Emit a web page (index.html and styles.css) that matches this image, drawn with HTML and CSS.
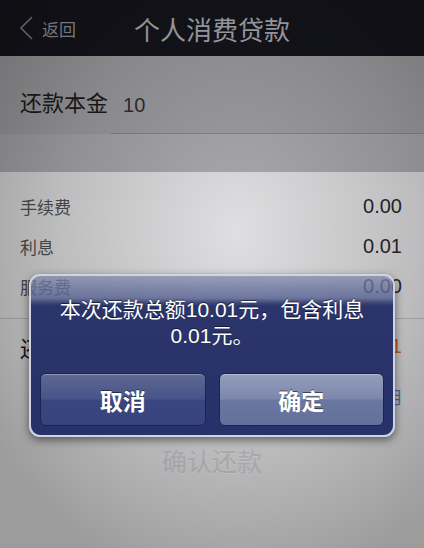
FILE: index.html
```html
<!DOCTYPE html>
<html lang="zh-CN">
<head>
    <meta charset="UTF-8">
    <meta name="viewport" content="width=device-width, initial-scale=1.0">
    <title>个人消费贷款</title>
    <link rel="stylesheet" href="styles.css">
</head>
<body>
    <div class="screen">
        <header class="nav-bar">
            <a class="back" href="#">
                <svg class="back-icon" width="14" height="24" viewBox="0 0 14 24">
                    <polyline points="13,1 2,12 13,23" fill="none" stroke="#85858d" stroke-width="1.6"></polyline>
                </svg>
                <span>返回</span>
            </a>
            <h1 class="nav-title">个人消费贷款</h1>
            <div></div>
        </header>

        <!-- 还款本金 -->
        <div class="principal">
            <span class="principal-label">还款本金</span>
            <span class="principal-value">10</span>
        </div>
        <div class="principal-line"></div>
        <div class="band"></div>

        <section class="details">
            <div class="detail-row">
                <span class="detail-label">手续费</span>
                <span class="detail-value">0.00</span>
            </div>
            <div class="detail-row">
                <span class="detail-label">利息</span>
                <span class="detail-value">0.01</span>
            </div>
            <div class="detail-row">
                <span class="detail-label">服务费</span>
                <span class="detail-value">0.00</span>
            </div>
            <div class="total-row">
                <span class="total-label">还款总额</span>
                <span class="total-value">10.01</span>
            </div>
            <div class="term-row">
                <a class="term-link" href="#">分期1个月</a>
            </div>
            <div class="submit-wrap">
                <button class="submit-btn">确认还款</button>
            </div>
        </section>

        <div class="dim"></div>

        <div class="alert">
            <p class="alert-text">本次还款总额10.01元，包含利息<br>0.01元。</p>
            <div class="alert-buttons">
                <button class="alert-btn alert-cancel">取消</button>
                <button class="alert-btn alert-ok">确定</button>
            </div>
        </div>
    </div>
</body>
</html>
```

FILE: styles.css
```css
* {
    box-sizing: border-box;
    margin: 0;
    padding: 0;
}

body {
    font-family: "Liberation Sans", "Noto Sans CJK SC", sans-serif;
    background: #e4e4e6;
}

.screen {
    position: relative;
    width: 424px;
    height: 548px;
    overflow: hidden;
    background: #e6e6e8;
}

.nav-bar {
    display: grid;
    grid-template-columns: 1fr auto 1fr;
    align-items: center;
    height: 56px;
    background: #15151d;
}

.back {
    display: flex;
    align-items: center;
    padding-left: 19px;
    color: #9c9ca4;
    font-size: 17px;
    text-decoration: none;
}

.back-icon {
    margin-right: 9px;
}

.nav-title {
    font-size: 26px;
    font-weight: normal;
    color: #b2b2ba;
}

.principal {
    display: flex;
    align-items: flex-end;
    height: 77px;
    padding: 0 20px 16px;
    background: #a6a6aa;
}

.principal-label {
    font-size: 22px;
    color: #1c1c1e;
}

.principal-value {
    margin-left: 15px;
    font-size: 20px;
    color: #333;
}

.principal-line {
    height: 1px;
    background: linear-gradient(to right, #a6a6aa 110px, #8e8e92 110px);
}

.band {
    height: 38px;
    background: #b0b0b4;
}

.details {
    height: 400px;
    padding-top: 14px;
    background: #e6e6e8;
}

.detail-row {
    display: flex;
    justify-content: space-between;
    align-items: center;
    height: 40px;
    padding: 0 22px 0 20px;
}

.detail-label {
    font-size: 17px;
    color: #535355;
}

.detail-value {
    font-size: 20px;
    color: #2a2a2c;
}

.total-row {
    display: flex;
    justify-content: space-between;
    align-items: center;
    height: 56px;
    margin-top: 12px;
    padding: 0 22px 0 20px;
    border-top: 1px solid #c4c4c8;
}

.total-label {
    font-size: 22px;
    color: #1c1c1e;
}

.total-value {
    font-size: 20px;
    color: #e0701e;
}

.term-row {
    display: flex;
    justify-content: flex-end;
    align-items: center;
    height: 44px;
    padding-right: 21px;
}

.term-link {
    font-size: 17px;
    color: #4c86c4;
    text-decoration: none;
}

.submit-wrap {
    padding: 18px 20px 0;
}

.submit-btn {
    width: 100%;
    height: 48px;
    border: none;
    background: transparent;
    font-family: inherit;
    font-size: 25px;
    color: #cfcfd3;
    text-shadow: 0 1px 0 rgba(255,255,255,0.4);
}

.dim {
    position: absolute;
    top: 0;
    left: 0;
    right: 0;
    bottom: 0;
    background: radial-gradient(ellipse 300px 360px at 56% 42%, rgba(0,0,0,0.03) 0%, rgba(0,0,0,0.18) 60%, rgba(0,0,0,0.32) 100%);
}

.alert {
    position: absolute;
    left: 29px;
    top: 274px;
    width: 366px;
    height: 163px;
    padding: 21px 9px 9px;
    border: 2px solid #cfd3e2;
    border-radius: 11px;
    background: linear-gradient(to bottom, rgba(128,136,172,0.72) 0, rgba(86,98,146,0.82) 22px, rgba(52,64,112,0.95) 27px, #2b356b 30px, #27316a 100%);
    box-shadow: 0 3px 8px rgba(0,0,0,0.5);
}

.alert-text {
    font-size: 21px;
    line-height: 26px;
    color: #fff;
    text-align: center;
    text-shadow: 0 -1px 0 rgba(0,0,0,0.5);
}

.alert-buttons {
    display: flex;
    gap: 13px;
    margin-top: 24px;
}

.alert-btn {
    flex: 1;
    height: 53px;
    border: 1px solid #1a2352;
    border-radius: 6px;
    font-family: inherit;
    font-size: 23px;
    font-weight: bold;
    color: #fff;
    text-shadow: 0 -1px 0 rgba(0,0,0,0.5);
    box-shadow: inset 0 1px 0 rgba(255,255,255,0.3);
}

.alert-cancel {
    background: linear-gradient(to bottom, #5d6892 0%, #48548a 48%, #3a4680 52%, #36437c 100%);
}

.alert-ok {
    background: linear-gradient(to bottom, #959dbc 0%, #7b87ac 48%, #6a77a0 52%, #63709c 100%);
}
```
